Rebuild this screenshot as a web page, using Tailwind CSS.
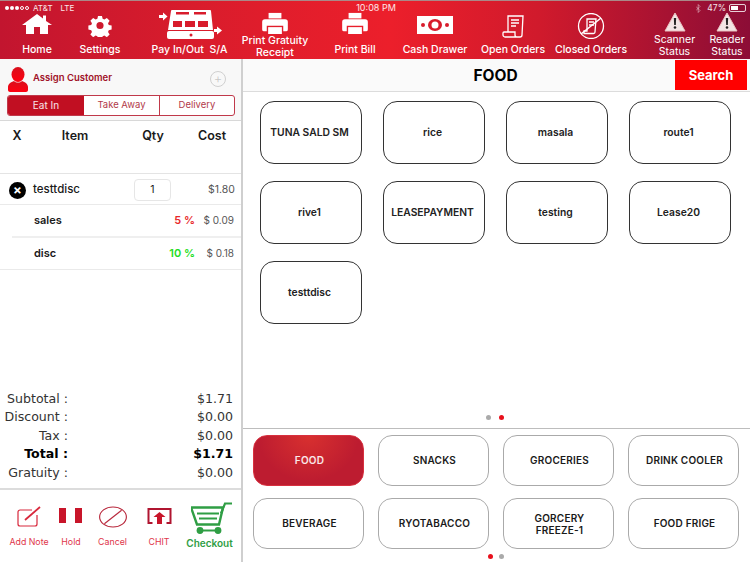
<!DOCTYPE html>
<html lang="en">
<head>
    <meta charset="UTF-8">
    <meta name="viewport" content="width=device-width, initial-scale=1.0">
    <title>POS - Food</title>
    <script src="https://cdn.jsdelivr.net/npm/@tailwindcss/browser@4"></script>
</head>
<body class="w-[750px] h-[562px] overflow-hidden bg-white font-['Inter',sans-serif] text-[#1a1a1a] flex flex-col">
    <!-- top bar -->
    <header class="relative h-[59px] shrink-0 border-t border-[#a88] bg-[linear-gradient(90deg,#c2152f_0%,#d81c2c_25%,#ec1f2b_52%,#d01a2c_72%,#8c0d36_100%)] text-white">
        <!-- status bar -->
        <div class="absolute left-[5px] right-[4px] top-[2px] flex justify-between text-[8px] leading-[10px] text-white/90">
            <span class="w-[120px] flex gap-[8px]"><span class="flex items-center gap-[4px]"><span class="flex gap-[1px]"><i class="w-[4px] h-[4px] rounded-full bg-white"></i><i class="w-[4px] h-[4px] rounded-full bg-white"></i><i class="w-[4px] h-[4px] rounded-full bg-white"></i><i class="w-[4px] h-[4px] rounded-full border-[0.5px] border-white"></i><i class="w-[4px] h-[4px] rounded-full border-[0.5px] border-white"></i></span>AT&amp;T</span><span>LTE</span></span>
            <span class="text-[9px] pl-[1px]">10:08 PM</span>
            <span class="w-[120px] flex justify-end items-center gap-[3px]">
                <svg width="5" height="9" viewBox="0 0 5 9" fill="none" stroke="#fff" stroke-opacity=".55" stroke-width=".8" class="mr-[3px]"><path d="M0 2.500L4 6.500 2.200 8.500V.5L4 2.500 0 6.500"/></svg>
                <span class="text-[8.500px]">47%</span><span class="w-[17px] h-[8px] border border-white/80 rounded-[2px] p-[1px]"><span class="block w-[7px] h-full bg-white"></span></span>
            </span>
        </div>
        <nav class="flex h-full pt-[12px] text-[10.500px] font-medium leading-[12px] text-center">
            <a class="w-[74px] shrink-0 flex flex-col items-center justify-between pb-[3px]">
                <svg width="30" height="20" viewBox="0 0 30 20" fill="#fff" class="mt-[1px]"><path d="M15 0 L21 4.500 L21 1.500 L24 1.500 L24 7 L30 11 L26 11 L26 20 L18 20 L18 13 L12 13 L12 20 L4 20 L4 11 L0 11 Z"/></svg>
                <span>Home</span>
            </a>
            <a class="w-[52px] shrink-0 flex flex-col items-center justify-between pb-[3px]">
                <svg width="24" height="23" viewBox="0 0 26 26" fill="#fff" class="mt-[1px]"><path fill-rule="evenodd" d="M10.500 1h5l.8 3.600 2.200.9 3.100-2 3.500 3.500-2 3.100.9 2.200 3.600.8v5l-3.600.8-.9 2.200 2 3.100-3.500 3.500-3.100-2-2.200.9-.8 3.600h-5l-.8-3.600-2.200-.9-3.100 2-3.500-3.500 2-3.100-.9-2.200-3.600-.8v-5l3.600-.8.9-2.200-2-3.100 3.500-3.500 3.100 2 2.200-.9zM13 8.500a4.500 4.500 0 1 0 0 9 4.500 4.500 0 0 0 0-9z" transform="translate(1.300 1.300) scale(.9)"/></svg>
                <span>Settings</span>
            </a>
            <a class="w-[127px] shrink-0 flex flex-col items-center justify-between pb-[3px]">
                <svg width="64" height="30" viewBox="0 0 64 30" fill="#fff" class="-mt-[4px]">
                    <path d="M1 6h4V3.500L9.500 7.500 5 11.500V9H1z"/>
                    <path d="M14 1h38a1 1 0 0 1 1 1l2 19H10l3-19a1 1 0 0 1 1-1z"/>
                    <path d="M11 22h43a2 2 0 0 1 2 2v4a2 2 0 0 1-2 2H11a2 2 0 0 1-2-2v-4a2 2 0 0 1 2-2z"/>
                    <path d="M56 20h3v-2.500l5 4-5 4V23h-3z"/>
                    <g fill="#d81c2c"><rect x="18" y="3" width="13" height="2.500"/><rect x="36" y="3" width="12" height="2.500"/><rect x="15" y="12" width="9" height="6"/><rect x="27" y="12" width="10" height="6"/><rect x="40" y="12" width="10" height="6"/><circle cx="33" cy="26" r="1.500"/></g>
                </svg>
                <span class="whitespace-pre">Pay In/Out  S/A</span>
            </a>
            <a class="w-[88px] shrink-0 -ml-[22px] flex flex-col items-center justify-between pb-[0px]">
                <svg width="28" height="22" viewBox="0 0 28 24" fill="#fff" class="-mt-[1px]"><path d="M7 1h14v6H7z"/><path d="M3 8h22a3 3 0 0 1 3 3v8a2 2 0 0 1-2 2h-3v-6H5v6H2a2 2 0 0 1-2-2v-8a3 3 0 0 1 3-3z"/><path d="M6.500 16.500h15V24h-15z"/></svg>
                <span class="leading-[12px]">Print Gratuity<br>Receipt</span>
            </a>
            <a class="w-[72px] shrink-0 flex flex-col items-center justify-between pb-[3px]">
                <svg width="28" height="22" viewBox="0 0 28 24" fill="#fff" class="-mt-[1px]"><path d="M7 1h14v6H7z"/><path d="M3 8h22a3 3 0 0 1 3 3v8a2 2 0 0 1-2 2h-3v-6H5v6H2a2 2 0 0 1-2-2v-8a3 3 0 0 1 3-3z"/><path d="M6.500 16.500h15V24h-15z"/></svg>
                <span>Print Bill</span>
            </a>
            <a class="w-[88px] shrink-0 flex flex-col items-center justify-between pb-[3px]">
                <svg width="36" height="18" viewBox="0 0 36 18" class="mt-[3px]"><rect width="36" height="18" fill="#fff"/><ellipse cx="18" cy="9" rx="7" ry="6" fill="#d81c2c"/><circle cx="18" cy="9" r="3.500" fill="#fff"/><circle cx="6" cy="9" r="2" fill="#d81c2c"/><circle cx="30" cy="9" r="2" fill="#d81c2c"/></svg>
                <span>Cash Drawer</span>
            </a>
            <a class="w-[68px] shrink-0 flex flex-col items-center justify-between pb-[3px]">
                <svg width="22" height="23" viewBox="0 0 22 23" fill="none" stroke="#fff" stroke-width="1.300" class="mt-[2px]"><path d="M6 17V1h15l-1 19a2 2 0 0 1-2 2H3a2 2 0 0 1-2-2v-2a1 1 0 0 1 1-1h11v3a2 2 0 0 0 2 2"/><path d="M9 5h8M9 8h8M9 11h5" stroke-width="1.500"/></svg>
                <span>Open Orders</span>
            </a>
            <a class="w-[88px] shrink-0 flex flex-col items-center justify-between pb-[3px]">
                <svg width="30" height="26" viewBox="0 0 30 26" fill="none" stroke="#fff" stroke-width="1.300"><circle cx="15" cy="13" r="12.500"/><path d="M11 18V6h9l-1 13a1.500 1.500 0 0 1-1.500 1.500H8v-2.500z"/><path d="M13 9h5M13 12h5"/><path d="M5 21L25 5" stroke-width="1.600"/></svg>
                <span>Closed Orders</span>
            </a>
            <a class="w-[53px] ml-[13px] shrink-0 flex flex-col items-center justify-between font-normal leading-[12px] pb-[1px]">
                <svg width="22" height="20" viewBox="0 0 22 20" class="-mt-[1px]"><path d="M11 1L21 19H1z" fill="#f3e5e5" stroke="#e9c0c0"/><path d="M9.800 6h2.400l-.4 7h-1.600z" fill="#222"/><circle cx="11" cy="15.500" r="1.300" fill="#222"/></svg>
                <span>Scanner<br>Status</span>
            </a>
            <a class="w-[52px] shrink-0 flex flex-col items-center justify-between font-normal leading-[12px] pb-[1px]">
                <svg width="22" height="20" viewBox="0 0 22 20" class="-mt-[1px]"><path d="M11 1L21 19H1z" fill="#f3e5e5" stroke="#e9c0c0"/><path d="M9.800 6h2.400l-.4 7h-1.600z" fill="#222"/><circle cx="11" cy="15.500" r="1.300" fill="#222"/></svg>
                <span>Reader<br>Status</span>
            </a>
        </nav>
    </header>

    <div class="flex-1 flex min-h-0">
        <!-- order panel -->
        <aside class="w-[243px] shrink-0 border-r-2 border-[#cfcfcf] flex flex-col">
            <div class="h-[62px] shrink-0 bg-[#f8f8f8] border-b border-[#d8d8d8] px-[7px] pt-[5px]">
                <div class="flex items-center h-[30px]">
                    <svg width="20" height="25" viewBox="0 0 20 25" class="ml-[1px]"><defs><linearGradient id="p" x1="0" y1="0" x2="0" y2="1"><stop offset="0" stop-color="#d80f1c"/><stop offset="1" stop-color="#ff0010"/></linearGradient></defs><ellipse cx="10" cy="7.500" rx="6.500" ry="7.500" fill="url(#p)"/><path d="M6 14c2 2 6 2 8 0 3 1 6 3 6 6v3c0 1-1 2-2 2H2c-1 0-2-1-2-2v-3c0-3 3-5 6-6z" fill="url(#p)"/></svg>
                    <span class="ml-[5px] -mt-[1px] text-[9.500px] font-semibold text-[#a01228]">Assign Customer</span>
                    <span class="ml-auto mr-[8px] -mt-[1px] w-[16px] h-[16px] rounded-full border border-[#d0d0d0] text-[#c8c8c8] flex items-center justify-center text-[13px] leading-none font-light">+</span>
                </div>
                <div class="mt-[1px] flex h-[21px] w-[228px] rounded-[3px] border border-[#c0394a] text-[9.500px] overflow-hidden text-[#b23a4a] bg-white">
                    <span class="w-[76px] bg-[#c10f22] text-white/90 flex items-center justify-center text-[10px]">Eat In</span>
                    <span class="w-[76px] border-r border-[#c0394a] flex items-center justify-center">Take Away</span>
                    <span class="flex-1 flex items-center justify-center">Delivery</span>
                </div>
            </div>

            <div class="h-[53px] shrink-0 border-b border-[#e4e4e4] grid grid-cols-[34px_82px_74px_1fr] pt-[8px] text-[12.500px] font-semibold leading-[14px] text-center">
                <span>X</span><span>Item</span><span>Qty</span><span class="pr-[7px]">Cost</span>
            </div>

            <div class="h-[31px] shrink-0 border-b border-[#eaeaea] flex items-center text-[11.500px] pl-[9px] pr-[6px] pt-[2px]">
                <span class="w-[17px] h-[17px] rounded-full bg-black text-white flex items-center justify-center text-[13px] font-bold leading-none">×</span>
                <span class="ml-[7px] font-medium">testtdisc</span>
                <span class="ml-[54px] w-[37px] h-[22px] border border-[#e6e6e6] rounded-[4px] flex items-center justify-center text-[10.500px]">1</span>
                <span class="ml-auto text-[#555] text-[10.500px]">$1.80</span>
            </div>
            <div class="ml-[12px] h-[33px] shrink-0 border-b-2 border-[#efefef] flex items-center text-[11px] pl-[22px] pr-[7px]">
                <span class="font-semibold">sales</span>
                <span class="ml-auto text-[#e8282a] font-semibold">5 %</span>
                <span class="w-[39px] text-right text-[#555] text-[10px]">$ 0.09</span>
            </div>
            <div class="h-[32px] shrink-0 border-b border-[#eaeaea] flex items-center text-[11px] pl-[34px] pr-[7px]">
                <span class="font-semibold">disc</span>
                <span class="ml-auto text-[#22dd22] font-semibold">10 %</span>
                <span class="w-[39px] text-right text-[#555] text-[10px]">$ 0.18</span>
            </div>

            <div class="mt-auto font-['DejaVu_Sans',sans-serif] text-[12.600px] leading-[18.500px] text-[#333] pr-[8px] pb-[6px]">
                <div class="flex justify-between"><span class="w-[68px] text-right">Subtotal :</span><span>$1.71</span></div>
                <div class="flex justify-between"><span class="w-[68px] text-right">Discount :</span><span>$0.00</span></div>
                <div class="flex justify-between"><span class="w-[68px] text-right">Tax :</span><span>$0.00</span></div>
                <div class="flex justify-between font-bold text-black"><span class="w-[68px] text-right">Total :</span><span>$1.71</span></div>
                <div class="flex justify-between"><span class="w-[68px] text-right">Gratuity :</span><span>$0.00</span></div>
            </div>

            <div class="h-[74px] shrink-0 border-t-2 border-[#dcdcdc] flex text-[8.800px] text-center text-[#e0364a] pl-[5px]">
                <a class="w-[48px] flex flex-col items-center pt-[16px]">
                    <svg width="24" height="21" viewBox="0 0 24 21" fill="none" stroke="#d8283c"><path d="M15 4H3a2 2 0 0 0-2 2v12a2 2 0 0 0 2 2h15a2 2 0 0 0 2-2V9" stroke-width="1.200"/><path d="M8 14L23 1" stroke-width="1.800"/></svg>
                    <span class="mt-[8px]">Add Note</span>
                </a>
                <a class="w-[36px] flex flex-col items-center pt-[16px]">
                    <svg width="24" height="21" viewBox="0 0 24 21" fill="#c8152a"><rect x="0" y="2" width="7" height="15"/><rect x="16" y="2" width="7" height="15"/></svg>
                    <span class="mt-[8px]">Hold</span>
                </a>
                <a class="w-[47px] flex flex-col items-center pt-[16px]">
                    <svg width="30" height="22" viewBox="0 0 30 23" fill="none" stroke="#b8283c" stroke-width="1.200" class="-mb-[1px]"><ellipse cx="15" cy="11.500" rx="14" ry="10.500"/><path d="M6 18.500L24 4.500"/></svg>
                    <span class="mt-[8px]">Cancel</span>
                </a>
                <a class="w-[46px] flex flex-col items-center pt-[16px]">
                    <svg width="25" height="21" viewBox="0 0 24 21" fill="none"><path d="M5 17H1V3h22v14h-4" stroke="#b01530" stroke-width="2"/><path d="M12 6l6 5h-3.500v7h-5v-7H6z" fill="#c8152a"/></svg>
                    <span class="mt-[8px]">CHIT</span>
                </a>
                <a class="w-[55px] flex flex-col items-center pt-[11px] text-[#2f9e44] font-semibold text-[10px]">
                    <svg width="42" height="36" viewBox="0 0 42 35" fill="none" stroke="#2f9e44" class="ml-[5px]"><path d="M0 6h32l-4 17H6z" stroke-width="2.400"/><path d="M6 12h22M8 17h18" stroke-width="2.200"/><path d="M30 12L34 2h7" stroke-width="2.200"/><path d="M9 29h19" stroke-width="2"/><circle cx="9" cy="29" r="3.400" fill="#2f9e44" stroke="none"/><circle cx="27" cy="29" r="3.400" fill="#2f9e44" stroke="none"/></svg>
                    <span class="-mt-[1px]">Checkout</span>
                </a>
            </div>
        </aside>

        <!-- menu panel -->
        <main class="flex-1 flex flex-col min-w-0">
            <div class="relative h-[33px] shrink-0 bg-[#fafafa] border-b border-[#dcdcdc] flex items-center justify-center text-[15.500px] font-bold text-black">
                <span class="pr-[2px] pt-[1px]">FOOD</span>
                <button class="absolute right-[3px] top-[1px] w-[72px] h-[30px] pt-[1px] bg-[#ff0000] text-white text-[13px] font-bold">Search</button>
            </div>
            <div class="h-[337px] shrink-0 border-b border-[#bdbdbd] flex flex-col pt-[9px] pl-[17px]">
                <div class="grid grid-cols-[repeat(4,102px)] auto-rows-[63px] gap-x-[21px] gap-y-[17px] text-[10.300px] font-semibold text-center text-[#222]">
                    <button class="border border-[#333] rounded-[14px] pr-[3px]">TUNA SALD SM</button>
                    <button class="border border-[#333] rounded-[14px] pr-[3px]">rice</button>
                    <button class="border border-[#333] rounded-[14px] pr-[3px]">masala</button>
                    <button class="border border-[#333] rounded-[14px] pr-[3px]">route1</button>
                    <button class="border border-[#333] rounded-[14px] pr-[3px]">rive1</button>
                    <button class="border border-[#333] rounded-[14px] pr-[3px]">LEASEPAYMENT</button>
                    <button class="border border-[#333] rounded-[14px] pr-[3px]">testing</button>
                    <button class="border border-[#333] rounded-[14px] pr-[3px]">Lease20</button>
                    <button class="border border-[#333] rounded-[14px] pr-[3px]">testtdisc</button>
                </div>
                <div class="mt-auto mb-[8px] flex justify-center gap-[8px] pr-[21px]">
                    <span class="w-[5px] h-[5px] rounded-full bg-[#aaa]"></span>
                    <span class="w-[5px] h-[5px] rounded-full bg-[#e8101c]"></span>
                </div>
            </div>
            <div class="flex-1 flex flex-col pt-[6px] pl-[10px]">
                <div class="grid grid-cols-[repeat(4,111px)] auto-rows-[51px] gap-x-[14px] gap-y-[12px] text-[10px] tracking-[0.2px] font-semibold text-center">
                    <button class="rounded-[14px] pl-[2px] text-white/90 border border-[#d8303f] bg-[radial-gradient(ellipse_at_50%_0%,#d8302f_0%,#bd1c30_65%)]">FOOD</button>
                    <button class="border border-[#aaa] rounded-[14px] pl-[2px]">SNACKS</button>
                    <button class="border border-[#aaa] rounded-[14px] pl-[2px]">GROCERIES</button>
                    <button class="border border-[#aaa] rounded-[14px] pl-[2px]">DRINK COOLER</button>
                    <button class="border border-[#aaa] rounded-[14px] pl-[2px]">BEVERAGE</button>
                    <button class="border border-[#aaa] rounded-[14px] pl-[2px]">RYOTABACCO</button>
                    <button class="border border-[#aaa] rounded-[14px] pl-[2px] leading-[12px]">GORCERY<br>FREEZE-1</button>
                    <button class="border border-[#aaa] rounded-[14px] pl-[2px]">FOOD FRIGE</button>
                </div>
                <div class="mt-[5px] flex justify-center gap-[6px] pr-[12px]">
                    <span class="w-[5px] h-[5px] rounded-full bg-[#e8101c]"></span>
                    <span class="w-[5px] h-[5px] rounded-full bg-[#aaa]"></span>
                </div>
            </div>
        </main>
    </div>
</body>
</html>
